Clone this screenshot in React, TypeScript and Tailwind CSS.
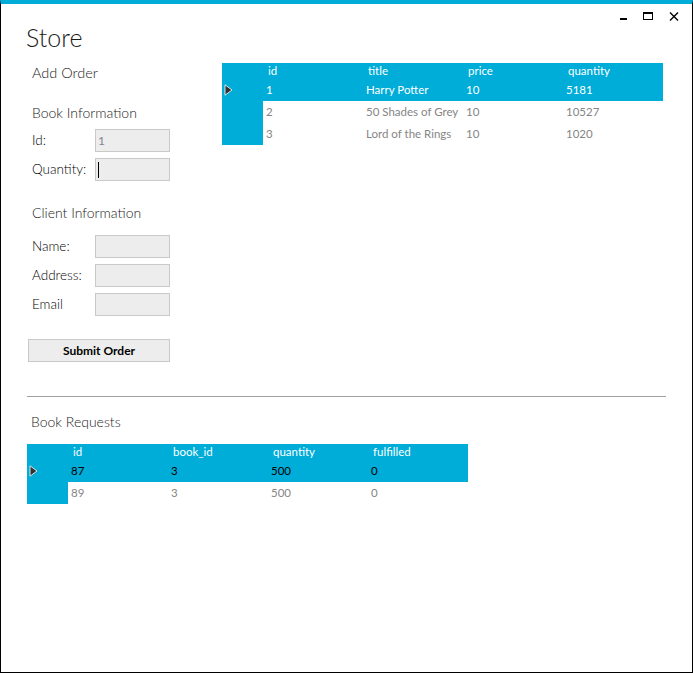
import React from 'react';

const BLUE = 'bg-[#00acd8]';

type Table = {
  columns: string[];
  rows: string[][];
  selectedText: string;
};

function RowArrow() {
  return (
    <svg width="9" height="12" viewBox="0 0 9 12" className="ml-[2px]">
      <path d="M1 0.8 L8 6 L1 11.2 Z" fill="#333" stroke="#f0f0f0" strokeWidth="0.9" />
    </svg>
  );
}

function DataGrid({ columns, rows, selectedText }: Table) {
  return (
    <div className="grid grid-cols-[41px_repeat(4,100px)] text-[11.5px] leading-none">
      {/* header */}
      <div className={`${BLUE} h-[16px]`} />
      {columns.map((c) => (
        <div key={c} className={`${BLUE} h-[16px] pl-[5px] flex items-center text-white`}>
          {c}
        </div>
      ))}
      {rows.map((row, i) => {
        const selected = i === 0;
        return (
          <React.Fragment key={i}>
            <div className={`${BLUE} h-[22px] flex items-center`}>{selected && <RowArrow />}</div>
            {row.map((cell, j) => (
              <div
                key={j}
                className={`h-[22px] pl-[3px] flex items-center whitespace-nowrap ${
                  selected ? `${BLUE} ${selectedText}` : 'bg-white text-[#858585]'
                }`}
              >
                {cell}
              </div>
            ))}
          </React.Fragment>
        );
      })}
    </div>
  );
}

function Field({ label, value, caret }: { label: string; value?: string; caret?: boolean }) {
  return (
    <div className="flex items-center h-[23px]">
      <div className="w-[68px] shrink-0 pl-[5px] text-[13.5px] font-light text-black">{label}</div>
      <div className="w-[75px] shrink-0 h-[23px] bg-[#ededed] border border-[#c9c9c9] flex items-center pl-[2px] text-[12px] text-[#8a7f95]">
        {value}
        {caret && <div className="w-px h-[16px] bg-black" />}
      </div>
    </div>
  );
}

export default function App() {
  return (
    <div className="w-[693px] h-[673px] bg-white border-t-4 border-t-[#00acd8] border-x border-b border-x-black border-b-black font-['Lato','Open_Sans',sans-serif] flex flex-col">
      {/* title bar */}
      <div className="flex justify-between items-start h-[59px]">
        <div className="pl-[25px] pt-[17px] text-[25px] leading-[32px] font-light text-[#1a1a1a]">Store</div>
        <div className="flex items-start pt-[8px] pr-[13px]">
          <div className="w-[7px] h-[2px] bg-black mt-[6px]" />
          <div className="w-[10px] h-[8px] border border-black border-t-2 ml-[16px]" />
          <svg width="10" height="9" viewBox="0 0 10 9" className="ml-[16px]">
            <path d="M1 0.5 L9 8.5 M9 0.5 L1 8.5" stroke="black" strokeWidth="1.4" />
          </svg>
        </div>
      </div>

      {/* add order + books */}
      <div className="flex pl-[26px]">
        <div className="w-[143px] flex flex-col">
          <div className="h-[20px] pl-[5px] flex items-center text-[14.5px] font-light text-[#1a1a1a]">Add Order</div>
          <div className="h-[20px] mt-[19px] pl-[5px] flex items-center text-[14px] font-light text-[#1a1a1a]">
            Book Information
          </div>
          <div className="mt-[7px] flex flex-col gap-[6px]">
            <Field label="Id:" value="1" />
            <Field label="Quantity:" caret />
          </div>
          <div className="h-[20px] mt-[21px] pl-[5px] flex items-center text-[14px] font-light text-[#1a1a1a]">
            Client Information
          </div>
          <div className="mt-[13px] flex flex-col gap-[6px]">
            <Field label="Name:" />
            <Field label="Address:" />
            <Field label="Email" />
          </div>
          <button className="mt-[23px] ml-px w-[142px] h-[23px] bg-[#ededed] border border-[#c9c9c9] text-[12px] font-bold text-black">
            Submit Order
          </button>
        </div>
        <div className="ml-[52px]">
          <DataGrid
            columns={['id', 'title', 'price', 'quantity']}
            rows={[
              ['1', 'Harry Potter', '10', '5181'],
              ['2', '50 Shades of Grey', '10', '10527'],
              ['3', 'Lord of the Rings', '10', '1020'],
            ]}
            selectedText="text-white"
          />
        </div>
      </div>

      <div className="mx-[26px] mt-[34px] h-px bg-[#a0a0a0]" />

      <div className="h-[20px] mt-[14px] pl-[30px] flex items-center text-[14px] font-light text-[#1a1a1a]">
        Book Requests
      </div>

      <div className="mt-[13px] pl-[26px]">
        <DataGrid
          columns={['id', 'book_id', 'quantity', 'fulfilled']}
          rows={[
            ['87', '3', '500', '0'],
            ['89', '3', '500', '0'],
          ]}
          selectedText="text-black"
        />
      </div>
    </div>
  );
}
